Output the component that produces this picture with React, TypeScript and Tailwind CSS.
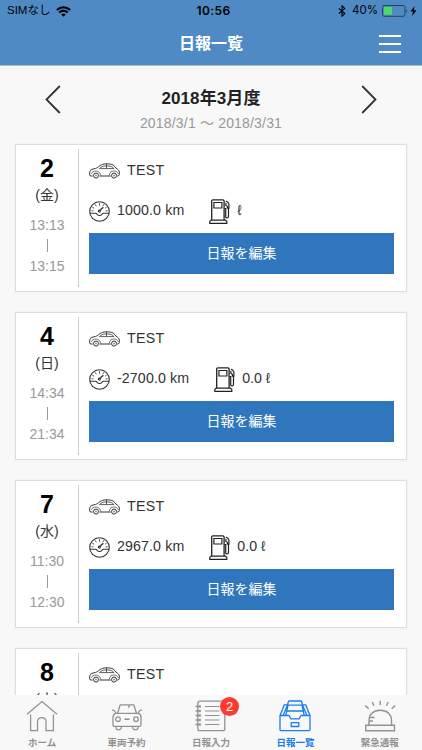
import type { ReactNode } from "react";

type Report = {
  day: number;
  weekday: string;
  start: string;
  end: string;
  distance: string;
  fuel: string;
};

const reports: Report[] = [
  { day: 2, weekday: "金", start: "13:13", end: "13:15", distance: "1000.0 km", fuel: "ℓ" },
  { day: 4, weekday: "日", start: "14:34", end: "21:34", distance: "-2700.0 km", fuel: "0.0 ℓ" },
  { day: 7, weekday: "水", start: "11:30", end: "12:30", distance: "2967.0 km", fuel: "0.0 ℓ" },
  { day: 8, weekday: "木", start: "", end: "", distance: "", fuel: "" },
];

const CarIcon = () => (
  <svg width="31" height="16" viewBox="0 0 31 16" fill="none" stroke="#333" strokeWidth="1">
    <path d="M3.500 13H1.300C.7 12.300.5 11.300.6 10c.2-2.400 1.400-3.600 4.400-4.200 2-.4 3.200-1 4.500-2.100C12.300 1.400 14.500.8 18 .8c4 0 6.200.8 8 3 .8 1 1.200 1.600 2.400 2.400 1.400 1 2 2.300 2 4 0 1.200-.2 2.200-1 2.800h-1.100M10.500 13h11" />
    <path d="M10.500 5.600c1.700-1.900 3.300-2.700 7-2.700 4.300 0 6 .8 7.500 2.700zM17.500 1v4.600" strokeWidth=".8" />
    <path d="M2.300 10.800c.9-1.900 2.400-2.700 4.600-2.700 2.600 0 4.200 1.300 4.700 4.300M20.200 12.400c.4-3 2-4.300 4.700-4.300 2 0 3.500.8 4.400 2.700" strokeWidth=".7" />
    <circle cx="7" cy="12.600" r="2.500" />
    <circle cx="25" cy="12.600" r="2.500" />
    <circle cx="7" cy="12.600" r=".6" strokeWidth=".5" />
    <circle cx="25" cy="12.600" r=".6" strokeWidth=".5" />
  </svg>
);

const GaugeIcon = () => (
  <svg width="21" height="21" viewBox="0 0 21 21" fill="none" stroke="#333" strokeWidth="1.100">
    <circle cx="10.500" cy="10.500" r="9.800" />
    <path d="M.8 12.300h5.700c.8 0 1 .2 1.600 1 1.300 1.500 3.500 1.500 4.800 0 .6-.8.800-1 1.600-1h5.700" />
    <path d="M10.500 2.300v2.300M6.300 3.400l1 1.800M14.700 3.400l-.8 1.500M3.400 6.300l1.700 1M17.600 6.300l-1.400.8M2.500 9.800h1.800M16.700 9.800h1.800" strokeWidth=".9" />
    <path d="M14.300 6.300l-3.200 3" strokeWidth="1.300" />
    <circle cx="10.400" cy="10.100" r="1" />
  </svg>
);

const PumpIcon = () => (
  <svg width="22" height="25" viewBox="0 0 22 25" fill="none" stroke="#222" strokeWidth="1.300">
    <path d="M2.700 21V2c0-.8.4-1.200 1.200-1.200h10c.8 0 1.200.4 1.200 1.200v19" />
    <path d="M4.900 3.500h8v5.500h-8zM2.300 21.200h14l1.500 1v2.100H.8v-2.100z" strokeWidth="1.200" />
    <path d="M15.200 9.500h1.500v8.700c.6 1 2.800.9 2.800-.6V10.200l.4-1.300V5l-1.500-2.300-1.500-.5M16.900 3.800v2.700l1.500.8v1.800h1.400" strokeWidth="1.200" />
  </svg>
);

const HomeIcon = () => (
  <svg width="32" height="32" viewBox="0 0 32 32" fill="none" stroke="currentColor" strokeWidth="1.300">
    <path d="M1 14.200L16 1.600l15 12.600" />
    <path d="M4.600 14.500v16.200h6.900v-8.900c0-5.600 8.500-5.600 8.500 0v8.900h7.400V14.500" />
  </svg>
);

const ReserveIcon = () => (
  <svg width="32" height="32" viewBox="0 0 32 32" fill="none" stroke="currentColor" strokeWidth="1.300">
    <path d="M6.500 13.300l2.700-8.500h13.600l2.700 8.500M4.500 13.400h23c1.800.8 2.500 2 2.500 4v7.300c0 1.100-.5 1.700-1.600 1.700H3.600c-1.100 0-1.600-.6-1.600-1.700v-7.300c0-2 .7-3.200 2.500-4zM1 9.800l2.400.9 1.500 2.600M31 9.800l-2.400.9-1.500 2.600M18.500 4.800l-1 3" />
    <circle cx="7" cy="19.200" r="2.300" />
    <circle cx="25" cy="19.200" r="2.300" />
    <path d="M13.500 19.200h5" strokeWidth="1.600" />
    <path d="M4.800 26.500c0 4.600 5.600 4.600 5.600 0M21.600 26.500c0 4.600 5.600 4.600 5.600 0" />
  </svg>
);

const NoteIcon = () => (
  <svg width="32" height="32" viewBox="0 0 32 32" fill="none" stroke="currentColor" strokeWidth="1.300">
    <rect x="2.800" y="1.200" width="27" height="29.500" rx="2" />
    <path d="M.5 6.500h5M.5 11h5M.5 15.500h5M.5 20h5M.5 24.500h5" />
    <path d="M5 5.300v2.400M5 9.800v2.400M5 14.300v2.400M5 18.800v2.400M5 23.300v2.400" strokeWidth="1.500" />
    <path d="M10 6.500h14.500M10 11h14.500M10 15.500h14.500M10 20h14.500M10 24.500h14.500" strokeWidth="1.100" />
  </svg>
);

const ListIcon = () => (
  <svg width="32" height="32" viewBox="0 0 32 32" fill="none" stroke="currentColor" strokeWidth="1.300" strokeLinejoin="round">
    <path d="M1 15.500h9l2 3.300h8l2-3.300h9v14c0 .8-.3 1.200-1.100 1.200H2.100c-.8 0-1.100-.4-1.100-1.200z" />
    <path d="M1.200 15.300L5.300 4.800H8M30.800 15.300L26.700 4.800H24" />
    <path d="M8.300 5.200l1.200-3.700c.1-.3.300-.5.700-.5h11.600c.4 0 .6.200.7.500l1.200 3.700M4.300 15.300L8.300 5.200h15.400l4 10.100M7 11h18M9 5.200L6.800 15.300M23 5.200l2.200 10.100" />
    <rect x="12.200" y="22.700" width="7.600" height="3.800" />
  </svg>
);

const AlarmIcon = () => (
  <svg width="32" height="32" viewBox="0 0 32 32" fill="none" stroke="currentColor" strokeWidth="1.400">
    <path d="M1.800 25.200h28.700v5.500H1.800zM5 25v-4.500C5 14 9.500 10.200 16.200 10.200s11.300 3.800 11.300 10.300V25" />
    <path d="M5 17.500h5.500M5 21h4" />
    <path d="M16.200.8v4.500M8.200 2l1.700 3.800M24.200 2l-1.700 3.800M1.200 5.500l3.500 3.300M31.200 5.500l-3.500 3.300" />
  </svg>
);

const StatusBar = () => (
  <div className="flex h-[22px] items-center justify-between pl-[7px] pr-[5px] text-black">
    <div className="flex w-[122px] items-center gap-[6px]">
      <span className="text-[11.500px] leading-none">SIMなし</span>
      <svg width="15" height="11" viewBox="0 0 15 11" fill="none" stroke="#000" strokeWidth="2">
        <path d="M.8 4c4-3.700 9.400-3.700 13.400 0M3.200 6.600c2.600-2.400 6-2.400 8.600 0" />
        <path d="M7.500 10.700L5.200 8.400c1.300-1.200 3.300-1.200 4.600 0z" fill="#000" stroke="none" />
      </svg>
    </div>
    <span className="pl-[3px] font-[Inter] text-[12px] font-semibold leading-none tracking-[0.4px]">10:56</span>
    <div className="flex w-[122px] items-center justify-end">
      <svg className="mr-[6px]" width="8" height="12" viewBox="0 0 8 12" fill="none" stroke="#000" strokeWidth="1.100">
        <path d="M.8 3.300l6 5.300L4 11.200V.8l2.800 2.600-6 5.300" />
      </svg>
      <span className="mr-[4px] font-[Inter] text-[11.500px] leading-none">40%</span>
      <svg className="-mt-px" width="26" height="12" viewBox="0 0 26 12" fill="none">
        <rect x=".5" y=".5" width="22.500" height="10.800" rx="1.800" stroke="#23415f" />
        <rect x="2" y="2" width="8" height="7.800" fill="#4cd964" />
        <path d="M24.300 4.200c1.200.6 1.200 3 0 3.600z" fill="#23415f" />
      </svg>
      <svg className="ml-[2px]" width="7" height="10" viewBox="0 0 6 10">
        <path d="M4 0L0 5.600h2.500L1.600 10 6 4.200H3.400z" fill="#000" />
      </svg>
    </div>
  </div>
);

const ReportCard = ({ report }: { report: Report }) => (
  <div className="flex h-[148px] shrink-0 border border-[#dedede] bg-white py-1 shadow-[0_0_1px_#ddd]">
    <div className="flex w-[63px] flex-col items-center border-r border-[#ccc] text-[14px] text-[#999]">
      <p className="mt-[6px] text-[25px] font-bold leading-[26px] text-black">{report.day}</p>
      <p className="mt-[4px] h-5 leading-5 text-[#333]">({report.weekday})</p>
      {report.start && (
        <>
          <p className="mt-[10px] h-5 leading-5">{report.start}</p>
          <span className="my-[4px] h-[13px] w-px bg-[#999]" />
          <p className="h-5 leading-5">{report.end}</p>
        </>
      )}
    </div>
    <div className="flex flex-1 flex-col pl-[10px] pr-3 text-[14.200px] text-[#333]">
      <div className="mt-[12px] flex h-5 items-center gap-[7px]">
        <CarIcon />
        <span className="-mt-px tracking-[0.300px]">TEST</span>
      </div>
      {report.distance && (
        <>
          <div className="mt-[17px] flex h-[26px] items-center">
            <GaugeIcon />
            <span className="ml-[7px] tracking-[0.120px]">{report.distance}</span>
            <span className="ml-[25px]">
              <PumpIcon />
            </span>
            <span className="ml-[6px]">{report.fuel}</span>
          </div>
          <button className="mt-[9px] h-[41px] bg-[#3076bc] text-[14px] text-white">日報を編集</button>
        </>
      )}
    </div>
  </div>
);

const Tab = ({ icon, label, active, badge }: { icon: ReactNode; label: string; active?: boolean; badge?: number }) => (
  <div className={`flex flex-1 flex-col items-center pt-[5px] ${active ? "text-[#1a7cf0]" : "text-[#929292]"}`}>
    <div className="relative">
      {icon}
      {badge && (
        <span className="absolute -right-[12px] -top-[3px] flex h-[19px] w-[19px] items-center justify-center rounded-full bg-[#fc3b30] text-[13px] leading-none text-white">
          {badge}
        </span>
      )}
    </div>
    <span className="mt-[4px] text-[9.500px] font-bold leading-[14px]">{label}</span>
  </div>
);

const App = () => {
  return (
    <div className="flex h-[750px] w-[422px] flex-col overflow-hidden bg-[#f8f8f8] font-['Liberation_Sans','Noto_Sans_CJK_JP',sans-serif]">
      <header className="h-[66px] shrink-0 border-b border-[#a5bdd6] bg-[#4f8ac4]">
        <StatusBar />
        <div className="grid h-[43px] grid-cols-3 items-center px-[21px]">
          <span />
          <h1 className="text-center text-[16px] font-bold leading-none text-white">日報一覧</h1>
          <button className="flex flex-col gap-[6px] justify-self-end">
            <span className="h-[2px] w-[22px] bg-white" />
            <span className="h-[2px] w-[22px] bg-white" />
            <span className="h-[2px] w-[22px] bg-white" />
          </button>
        </div>
      </header>
      <main className="flex min-h-0 flex-1 flex-col overflow-hidden pl-[15px] pr-[15px]">
        <div className="flex h-[78px] shrink-0 justify-between px-[30px] pt-[19px]">
          <svg width="16" height="29" viewBox="0 0 16 29" fill="none" stroke="#333" strokeWidth="1.800">
            <path d="M14.800 1L1.500 14.500l13.300 13.500" />
          </svg>
          <div className="text-center">
            <h2 className="mt-[2px] text-[17px] font-bold leading-6 tracking-[0.100px] text-[#222]">2018年3月度</h2>
            <p className="mt-[2px] text-[14px] leading-5 tracking-[0.180px] text-[#999]">2018/3/1 〜 2018/3/31</p>
          </div>
          <svg width="16" height="29" viewBox="0 0 16 29" fill="none" stroke="#333" strokeWidth="1.800">
            <path d="M1.200 1l13.300 13.500L1.200 28" />
          </svg>
        </div>
        <div className="flex flex-col gap-5">
          {reports.map((report) => (
            <ReportCard key={report.day} report={report} />
          ))}
        </div>
      </main>
      <nav className="flex h-[55px] shrink-0 bg-[#f8f8f8]">
        <Tab icon={<HomeIcon />} label="ホーム" />
        <Tab icon={<ReserveIcon />} label="車両予約" />
        <Tab icon={<NoteIcon />} label="日報入力" badge={2} />
        <Tab icon={<ListIcon />} label="日報一覧" active />
        <Tab icon={<AlarmIcon />} label="緊急通報" />
      </nav>
    </div>
  );
};

export default App;
